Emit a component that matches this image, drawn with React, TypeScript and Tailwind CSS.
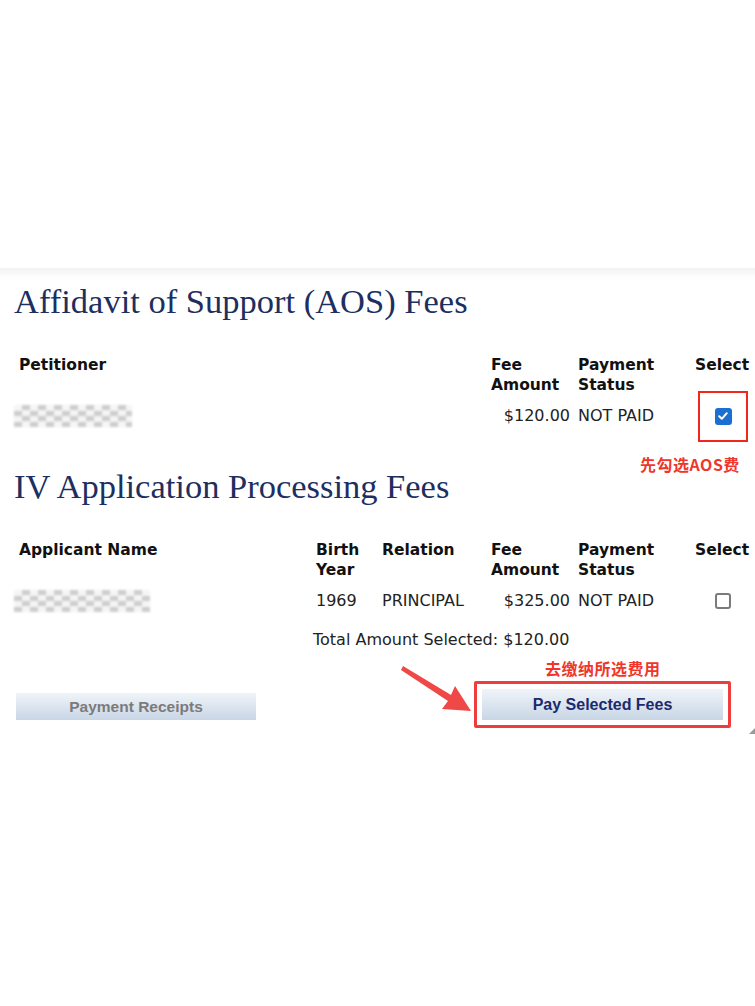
import React from "react";

const sans = "font-['DejaVu_Sans',Verdana,sans-serif]";
const serif = "font-['Liberation_Serif','Times_New_Roman',serif]";
const cjk = "font-['Noto_Sans_CJK_SC','Noto_Sans',sans-serif]";

function Redacted({ w }: { w: string }) {
  return (
    <div
      className={`${w} h-[22px] bg-[repeating-conic-gradient(#c9c9c9_0_25%,#f4f4f4_0_50%)] bg-[length:16px_11px] blur-[1.2px] opacity-90`}
    />
  );
}

function Checkbox({ checked }: { checked?: boolean }) {
  if (checked) {
    return (
      <div className="w-[17px] h-[17px] rounded-[3px] bg-[#1b6fd1] flex items-center justify-center">
        <svg width="12" height="12" viewBox="0 0 12 12">
          <path d="M2.2 6.3 L4.8 8.8 L9.8 3.2" fill="none" stroke="white" strokeWidth="2" strokeLinecap="round" strokeLinejoin="round" />
        </svg>
      </div>
    );
  }
  return <div className="w-[16px] h-[16px] rounded-[3px] border-2 border-[#7a7a7a] bg-white" />;
}

export default function App() {
  return (
    <div className={`w-[755px] h-[1006px] bg-white overflow-hidden ${sans} text-[16px] leading-[20px] text-[#222]`}>
      <div className="mt-[268px] h-[10px] bg-gradient-to-b from-[#f2f2f2] to-white" />
      <div className="relative">
        <h1 className={`${serif} text-[#1d2f5f] text-[34.5px] leading-[40px] pl-[14px] mt-[3px]`}>
          Affidavit of Support (AOS) Fees
        </h1>

        {/* AOS table */}
        <div className="grid grid-cols-[472px_87px_117px_1fr] pl-[19px] mt-[34px] font-bold text-[15.5px] text-[#111]">
          <div>Petitioner</div>
          <div>Fee<br />Amount</div>
          <div>Payment<br />Status</div>
          <div>Select</div>
        </div>
        <div className="grid grid-cols-[472px_87px_117px_1fr] pl-[19px] mt-[8px] items-center h-[26px]">
          <div className="-ml-[5px]"><Redacted w="w-[118px]" /></div>
          <div className="text-right pr-[8px]">$120.00</div>
          <div>NOT PAID</div>
          <div className="relative flex justify-center pr-[4px]">
            <Checkbox checked />
            <div className="absolute left-[3px] top-[-17px] w-[50px] h-[51px] border-2 border-[#f0281c]" />
          </div>
        </div>

        <div className={`absolute left-[640px] top-[173px] ${cjk} font-bold text-[16px] leading-[20px] text-[#f0362a] tracking-[0.5px]`}>
          先勾选AOS费
        </div>

        <h1 className={`${serif} text-[#1d2f5f] text-[34.5px] leading-[40px] pl-[14px] mt-[37px]`}>
          IV Application Processing Fees
        </h1>

        {/* IV table */}
        <div className="grid grid-cols-[297px_66px_109px_87px_117px_1fr] pl-[19px] mt-[34px] font-bold text-[15.5px] text-[#111]">
          <div>Applicant Name</div>
          <div>Birth<br />Year</div>
          <div>Relation</div>
          <div>Fee<br />Amount</div>
          <div>Payment<br />Status</div>
          <div>Select</div>
        </div>
        <div className="grid grid-cols-[297px_66px_109px_87px_117px_1fr] pl-[19px] mt-[8px] items-center h-[26px]">
          <div className="-ml-[5px]"><Redacted w="w-[136px]" /></div>
          <div>1969</div>
          <div>PRINCIPAL</div>
          <div className="text-right pr-[8px]">$325.00</div>
          <div>NOT PAID</div>
          <div className="flex justify-center pr-[4px]">
            <Checkbox />
          </div>
        </div>
        <div className="pl-[313px] mt-[16px]">Total Amount Selected: $120.00</div>

        <div className={`absolute left-[545px] top-[377px] ${cjk} font-bold text-[16px] leading-[20px] text-[#f0362a] tracking-[0.5px]`}>
          去缴纳所选费用
        </div>

        <svg className="absolute left-[399px] top-[381px]" width="80" height="56" viewBox="0 0 80 56">
          <path d="M4 4 L52 33 L56 24 L72 49 L43 47 L49 39 L2 8 Z" fill="#f04747" />
        </svg>

        <div className="flex items-center justify-between mt-[35px] pl-[16px] pr-[24px]">
          <button className="w-[240px] h-[27px] bg-gradient-to-b from-[#f0f4f9] to-[#c8d6e5] font-['Liberation_Sans',Arial,sans-serif] font-bold text-[15.5px] text-[#7b7b7b]">
            Payment Receipts
          </button>
          <div className="border-[3px] border-[#ee3d3d] rounded-[2px] p-[5px] -mt-[4px]">
            <button className="w-[241px] h-[31px] bg-gradient-to-b from-[#f0f4f9] to-[#c8d6e5] font-['Liberation_Sans',Arial,sans-serif] font-bold text-[16px] text-[#1b2a6e]">
              Pay Selected Fees
            </button>
          </div>
        </div>
        <div className="absolute right-0 top-[447px] w-0 h-0 border-l-[6px] border-l-transparent border-b-[6px] border-b-[#9a9a9a]" />
      </div>
    </div>
  );
}
